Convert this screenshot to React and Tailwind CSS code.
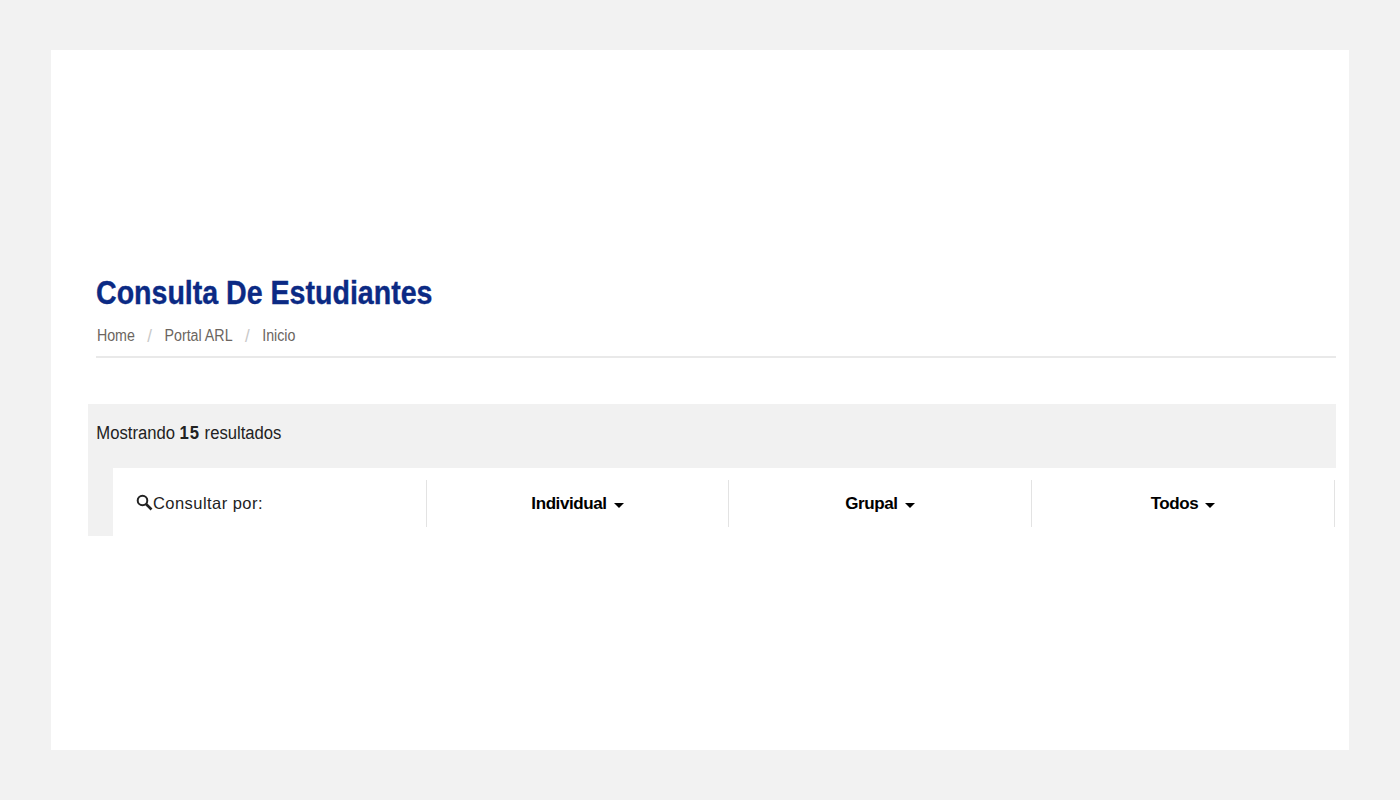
const sans = { fontFamily: '"Liberation Sans", Arial, sans-serif' }

function Caret() {
  return <span className="ml-[7px] mt-[3px] inline-block border-x-[5px] border-t-[5px] border-x-transparent border-t-black" />
}

function Filter({ label, className }) {
  return (
    <div className={`flex h-[47px] items-center justify-center border-r border-[#e3e3e3] text-[17px] font-bold tracking-[-0.4px] text-black ${className}`} style={sans}>
      {label}
      <Caret />
    </div>
  )
}

export default function App() {
  return (
    <div className="min-h-[800px] bg-[#f2f2f2] px-[51px] py-[50px]">
      <div className="h-[700px] bg-white pl-[37px] pr-[13px] pt-[222px]" style={sans}>
        {/* Page heading, the original face is condensed so the rows are squeezed */}
        <div className="ml-[8px] border-b-2 border-[#e9e9e9] pb-[10px]">
          <h1 className="origin-left scale-x-[0.84] whitespace-nowrap text-[34px] font-bold leading-[40px] text-[#0b2a84] [-webkit-text-stroke:0.4px_#0b2a84]">
            Consulta De Estudiantes
          </h1>
          <div className="mt-[14px] flex h-[20px] origin-left scale-x-[0.89] items-center whitespace-nowrap text-[16px] leading-[20px] text-[#6b6560]">
            <span className="ml-[1px]">Home</span>
            <span className="mx-[14px] text-[19px] text-[#c8c8c8]">/</span>
            <span>Portal ARL</span>
            <span className="mx-[14px] text-[19px] text-[#c8c8c8]">/</span>
            <span>Inicio</span>
          </div>
        </div>

        {/* Results */}
        <div className="mt-[46px] h-[132px] bg-[#f1f1f1]">
          <div className="flex h-[58px] origin-left scale-x-[0.925] items-center whitespace-pre pl-[9px] text-[18px] text-[#222]">
            Mostrando <b className="font-bold tracking-[1px]">15</b> resultados
          </div>
          <div className="ml-[25px] mt-[6px] flex h-[68px] bg-white pt-[12px]">
            <div className="flex h-[47px] w-[314px] items-center border-r border-[#e3e3e3] pl-[23px] text-[16.5px] tracking-[0.45px] text-[#222]">
              <svg className="mb-[3px]" width="17" height="17" viewBox="0 0 17 17" fill="none" stroke="#222" strokeWidth="2">
                <circle cx="6.5" cy="6.5" r="4.8" />
                <path d="M10 10l5.5 5.5" strokeWidth="2.6" />
              </svg>
              <span>Consultar por:</span>
            </div>
            <Filter label="Individual" className="w-[302px]" />
            <Filter label="Grupal" className="w-[303px]" />
            <Filter label="Todos" className="w-[303px]" />
          </div>
        </div>
      </div>
    </div>
  )
}
